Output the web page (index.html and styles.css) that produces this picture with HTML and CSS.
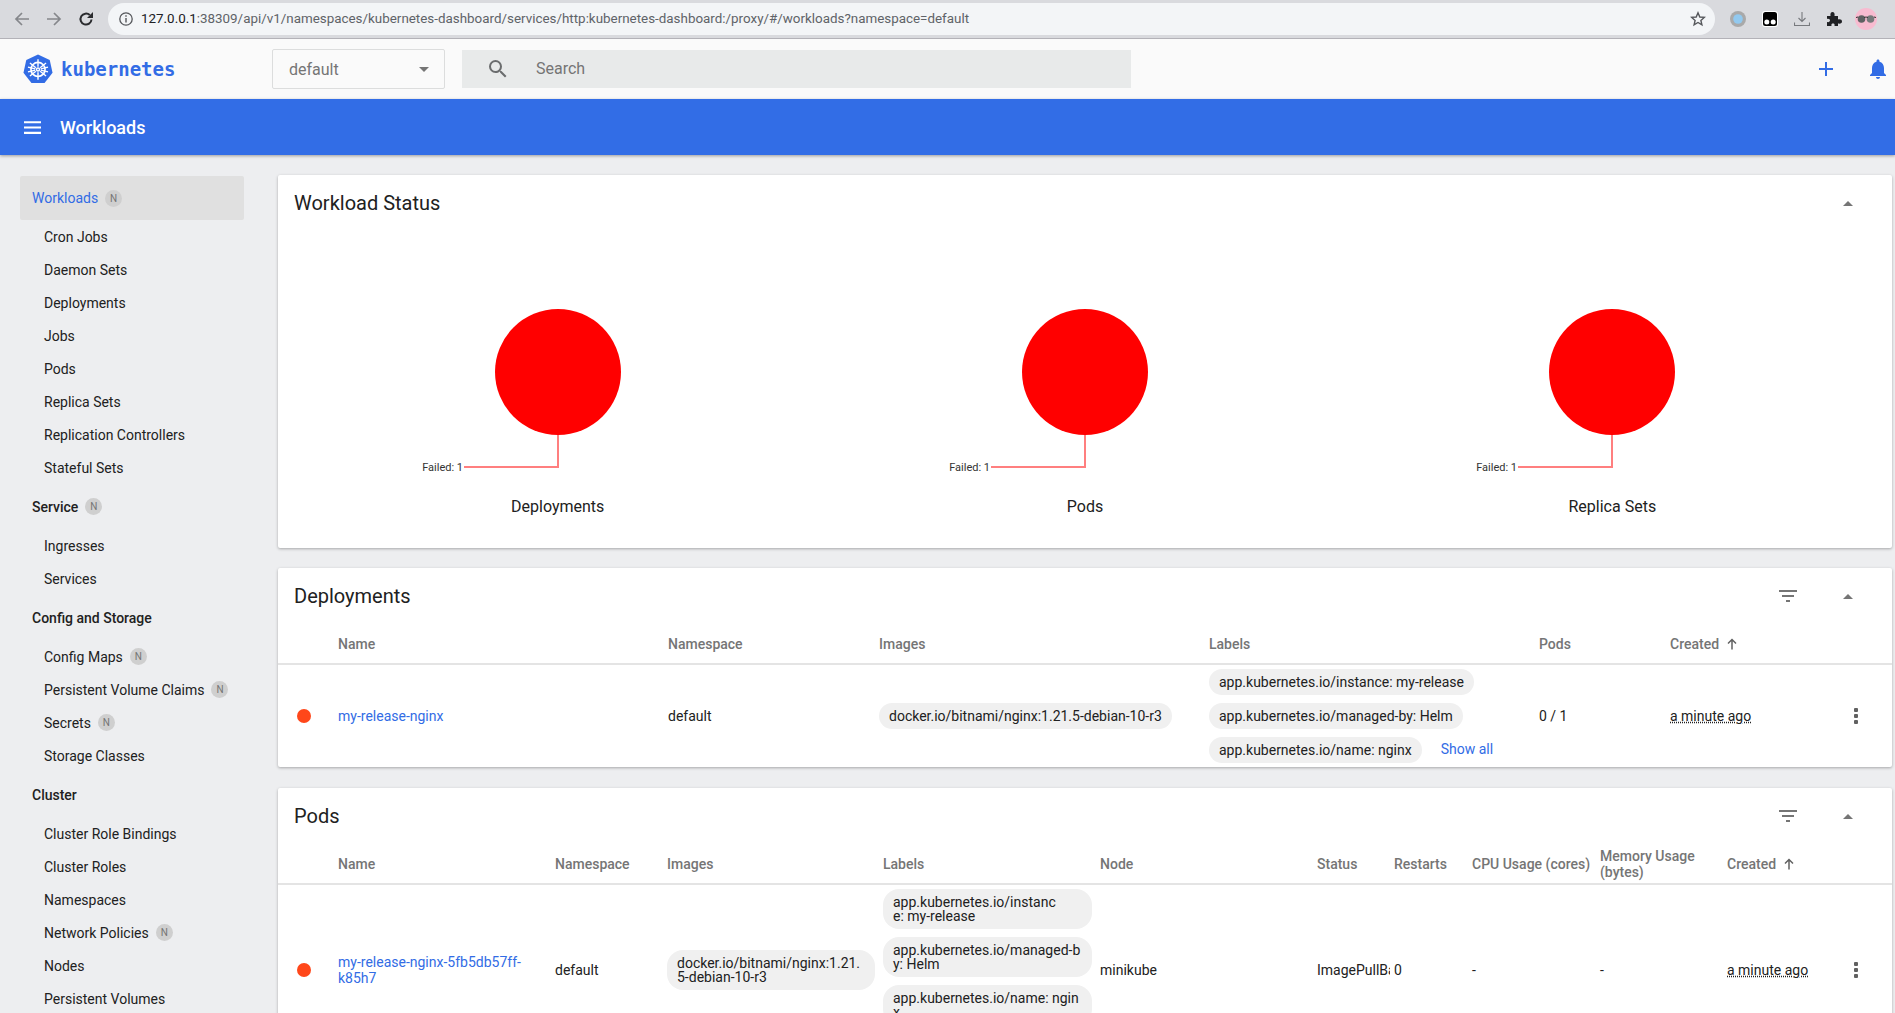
FILE: index.html
```html
<!DOCTYPE html>
<html lang="en">
<head>
    <meta charset="UTF-8">
    <title>Workloads - Kubernetes Dashboard</title>
    <link rel="stylesheet" href="styles.css">
</head>
<body>
    <!-- browser chrome -->
    <div class="browser-bar">
        <svg class="nav-icon" viewBox="0 0 16 16"><path d="M15 8H2M8 2 2 8l6 6" fill="none" stroke="#85878b" stroke-width="1.7"/></svg>
        <svg class="nav-icon" viewBox="0 0 16 16"><path d="M1 8h13M8 2l6 6-6 6" fill="none" stroke="#85878b" stroke-width="1.7"/></svg>
        <svg class="nav-icon" viewBox="0 0 16 16"><path d="M13.500 8.500a5.500 5.500 0 1 1-1.700-4.400" fill="none" stroke="#2a2b2e" stroke-width="2"/><path d="M15 1v6H9z" fill="#2a2b2e"/></svg>
        <div class="address">
            <svg class="info-icon" viewBox="0 0 16 16"><circle cx="8" cy="8" r="6.200" fill="none" stroke="#55575b" stroke-width="1.300"/><path d="M7.300 7h1.400v4.500H7.300zM7.300 4.300h1.400v1.500H7.300z" fill="#55575b"/></svg>
            <span class="url"><b>127.0.0.1</b>:38309/api/v1/namespaces/kubernetes-dashboard/services/http:kubernetes-dashboard:/proxy/#/workloads?namespace=default</span>
            <svg class="star-icon" viewBox="0 0 16 16"><path d="M8 1.800 9.800 6l4.500.4-3.400 3 1 4.400L8 11.500l-3.900 2.300 1-4.400-3.400-3L6.200 6z" fill="none" stroke="#55575b" stroke-width="1.400"/></svg>
        </div>
        <div class="ext-icons">
            <svg viewBox="0 0 16 16"><circle cx="8" cy="8" r="8" fill="#a9a9a9"/><circle cx="8" cy="8" r="4.800" fill="#92c9ef"/></svg>
            <svg viewBox="0 0 16 16"><rect width="16" height="16" rx="3" fill="#fff"/><rect x="1" y="1" width="14" height="14" rx="2.500" fill="#000"/><circle cx="4.800" cy="11" r="2.500" fill="#fff"/><circle cx="11.200" cy="11" r="2.500" fill="#fff"/></svg>
            <svg viewBox="0 0 16 16"><path d="M8 1v9M4.500 7 8 10.500 11.500 7M.5 11.500v3h15v-3" fill="none" stroke="#77797d" stroke-width="1.100"/></svg>
            <svg viewBox="0 0 16 16"><path d="M1 5h3.500C4 2.500 5 1 6.500 1S9 2.500 8.500 5H12v3.500c2.500-.5 4 .3 4 2s-1.500 2.500-4 2V15H8.500c.5-2-.5-2.500-1.500-2.500S5 13 5.500 15H1v-4c2 .5 3-.5 3-1.500S3 7.500 1 8z" fill="#202124"/></svg>
            <svg class="avatar" viewBox="0 0 22 22"><circle cx="11" cy="11" r="11" fill="#f8bbd0"/><circle cx="6.500" cy="11" r="3.800" fill="#5f6062"/><circle cx="15.500" cy="11" r="3.800" fill="#77797b"/><path d="M9 9.500q2-1 4 0M1 9.500l2-.5M21 9.500l-2-.5" fill="none" stroke="#333" stroke-width="1"/></svg>
        </div>
    </div>

    <!-- top toolbar -->
    <header class="app-bar">
        <div class="brand">
            <svg class="logo" viewBox="0 0 32 32">
                <path d="M16 .5 28.500 6.500 31.500 20 23 31H9L.5 20 3.500 6.500z" fill="#326ce5"/>
                <g fill="none" stroke="#fff">
                    <circle cx="16" cy="16.500" r="7.500" stroke-width="1.800"/>
                    <circle cx="16" cy="16.500" r="1.600" stroke-width="1.500"/>
                    <path d="M16 5.500v8M16 19.500v8M7.400 9.600l6.300 5M18.300 18.400l6.300 5M24.600 9.600l-6.300 5M13.700 18.400l-6.300 5M5.300 19l7.800-1.800M18.900 15.800l7.800-1.800M5.300 14l7.800 1.800M18.900 17.200l7.800 1.800" stroke-width="1.500"/>
                </g>
            </svg>
            <span class="brand-name">kubernetes</span>
        </div>
        <div class="ns-select">
            <span>default</span>
            <i class="caret-down"></i>
        </div>
        <div class="search">
            <svg class="search-icon" viewBox="0 0 24 24"><path d="M15.500 14h-.79l-.28-.27A6.470 6.470 0 0 0 16 9.500 6.500 6.500 0 1 0 9.500 16c1.610 0 3.090-.59 4.230-1.570l.27.28v.79l5 4.990L20.490 19l-4.990-5zm-6 0C7.010 14 5 11.990 5 9.500S7.010 5 9.500 5 14 7.010 14 9.500 11.990 14 9.500 14z" fill="#6b6d6e"/></svg>
            <span>Search</span>
        </div>
        <div class="app-actions">
            <svg viewBox="0 0 24 24"><path d="M19 13h-6v6h-2v-6H5v-2h6V5h2v6h6v2z" fill="#326ce5"/></svg>
            <svg viewBox="0 0 24 24"><path d="M12 22c1.100 0 2-.9 2-2h-4c0 1.100.9 2 2 2zm6-6v-5c0-3.070-1.630-5.640-4.500-6.320V4c0-.83-.67-1.500-1.500-1.500s-1.500.67-1.500 1.500v.68C7.640 5.360 6 7.920 6 11v5l-2 2v1h16v-1l-2-2z" fill="#326ce5"/></svg>
        </div>
    </header>

    <div class="title-bar">
        <svg class="menu-icon" viewBox="0 0 16 12"><path d="M0 0h16v2H0zM0 5h16v2H0zM0 10h16v2H0z" fill="#fff"/></svg>
        <span>Workloads</span>
    </div>

    <div class="layout">
        <nav class="sidebar">
            <div class="nav-head active">Workloads <em class="badge">N</em></div>
            <a class="nav-item">Cron Jobs</a>
            <a class="nav-item">Daemon Sets</a>
            <a class="nav-item">Deployments</a>
            <a class="nav-item">Jobs</a>
            <a class="nav-item">Pods</a>
            <a class="nav-item">Replica Sets</a>
            <a class="nav-item">Replication Controllers</a>
            <a class="nav-item">Stateful Sets</a>
            <div class="nav-head">Service <em class="badge">N</em></div>
            <a class="nav-item">Ingresses</a>
            <a class="nav-item">Services</a>
            <div class="nav-head">Config and Storage</div>
            <a class="nav-item">Config Maps <em class="badge">N</em></a>
            <a class="nav-item">Persistent Volume Claims <em class="badge">N</em></a>
            <a class="nav-item">Secrets <em class="badge">N</em></a>
            <a class="nav-item">Storage Classes</a>
            <div class="nav-head">Cluster</div>
            <a class="nav-item">Cluster Role Bindings</a>
            <a class="nav-item">Cluster Roles</a>
            <a class="nav-item">Namespaces</a>
            <a class="nav-item">Network Policies <em class="badge">N</em></a>
            <a class="nav-item">Nodes</a>
            <a class="nav-item">Persistent Volumes</a>
        </nav>

        <main class="content">
            <section class="card status-card">
                <div class="card-head">
                    <h2>Workload Status</h2>
                    <i class="caret-up"></i>
                </div>
                <div class="charts">
                    <div class="chart">
                        <svg viewBox="0 0 300 230"><circle cx="150" cy="118" r="63" fill="#f00"/><path d="M150 181v32H56" fill="none" stroke="#ff7f7f" stroke-width="2"/><text x="55" y="217" text-anchor="end">Failed: 1</text></svg>
                        <p>Deployments</p>
                    </div>
                    <div class="chart">
                        <svg viewBox="0 0 300 230"><circle cx="150" cy="118" r="63" fill="#f00"/><path d="M150 181v32H56" fill="none" stroke="#ff7f7f" stroke-width="2"/><text x="55" y="217" text-anchor="end">Failed: 1</text></svg>
                        <p>Pods</p>
                    </div>
                    <div class="chart">
                        <svg viewBox="0 0 300 230"><circle cx="150" cy="118" r="63" fill="#f00"/><path d="M150 181v32H56" fill="none" stroke="#ff7f7f" stroke-width="2"/><text x="55" y="217" text-anchor="end">Failed: 1</text></svg>
                        <p>Replica Sets</p>
                    </div>
                </div>
            </section>

            <section class="card">
                <div class="card-head">
                    <h2>Deployments</h2>
                    <svg class="filter-icon" viewBox="0 0 18 12"><path d="M0 0h18v2H0zM3 5h12v2H3zM7 10h4v2H7z" fill="#757575"/></svg>
                    <i class="caret-up"></i>
                </div>
                <table class="deployments">
                    <thead>
                        <tr>
                            <th></th><th>Name</th><th>Namespace</th><th>Images</th><th>Labels</th><th>Pods</th>
                            <th>Created <svg class="sort-arrow" viewBox="0 0 12 12"><path d="M6 11.500V1.500M2 5.500l4-4 4 4" fill="none" stroke="#616161" stroke-width="1.500"/></svg></th><th></th>
                        </tr>
                    </thead>
                    <tbody>
                        <tr>
                            <td><i class="dot"></i></td>
                            <td><a class="link">my-release-nginx</a></td>
                            <td>default</td>
                            <td><span class="chip">docker.io/bitnami/nginx:1.21.5-debian-10-r3</span></td>
                            <td>
                                <span class="chip first">app.kubernetes.io/instance: my-release</span>
                                <span class="chip">app.kubernetes.io/managed-by: Helm</span>
                                <span class="chip last">app.kubernetes.io/name: nginx</span><a class="link show-all">Show all</a>
                            </td>
                            <td>0 / 1</td>
                            <td><abbr>a minute ago</abbr></td>
                            <td><i class="more"></i></td>
                        </tr>
                    </tbody>
                </table>
            </section>

            <section class="card">
                <div class="card-head">
                    <h2>Pods</h2>
                    <svg class="filter-icon" viewBox="0 0 18 12"><path d="M0 0h18v2H0zM3 5h12v2H3zM7 10h4v2H7z" fill="#757575"/></svg>
                    <i class="caret-up"></i>
                </div>
                <table class="pods">
                    <thead>
                        <tr>
                            <th></th><th>Name</th><th>Namespace</th><th>Images</th><th>Labels</th><th>Node</th><th>Status</th><th>Restarts</th>
                            <th>CPU Usage (cores)</th><th>Memory Usage (bytes)</th>
                            <th>Created <svg class="sort-arrow" viewBox="0 0 12 12"><path d="M6 11.500V1.500M2 5.500l4-4 4 4" fill="none" stroke="#616161" stroke-width="1.500"/></svg></th><th></th>
                        </tr>
                    </thead>
                    <tbody>
                        <tr>
                            <td><i class="dot"></i></td>
                            <td><a class="link">my-release-nginx-5fb5db57ff-k85h7</a></td>
                            <td>default</td>
                            <td><span class="chip wrap">docker.io/bitnami/nginx:1.21.5-debian-10-r3</span></td>
                            <td class="pod-labels">
                                <span class="chip wrap">app.kubernetes.io/instanc<br>e: my-release</span>
                                <span class="chip wrap">app.kubernetes.io/managed-by: Helm</span>
                                <span class="chip wrap">app.kubernetes.io/name: nginx</span>
                                <a class="link show-all">Show all</a>
                            </td>
                            <td>minikube</td>
                            <td><span class="clip">ImagePullBackOff</span></td>
                            <td>0</td>
                            <td>-</td>
                            <td>-</td>
                            <td><abbr>a minute ago</abbr></td>
                            <td><i class="more"></i></td>
                        </tr>
                    </tbody>
                </table>
            </section>
        </main>
    </div>
</body>
</html>
```

FILE: styles.css
```css
html, body {
    height: 100%;
}
body {
    margin: 0;
    height: 1013px;
    overflow: hidden;
    display: flex;
    flex-direction: column;
    font-family: Roboto, "Liberation Sans", sans-serif;
    font-size: 14px;
    color: #212121;
    background-color: #edeef0;
}

/* browser chrome */
.browser-bar {
    flex: none;
    height: 38px;
    display: flex;
    align-items: center;
    padding-left: 14px;
    background-color: #d9dade;
    border-bottom: 1px solid #b3b2b8;
}
.nav-icon {
    flex: none;
    width: 16px;
    height: 16px;
    margin-right: 16px;
}
.address {
    flex: none;
    width: 1607px;
    height: 32px;
    margin-left: -2px;
    box-sizing: border-box;
    display: flex;
    align-items: center;
    padding: 0 9px 0 10px;
    background-color: #f3f5f7;
    border-radius: 16px;
}
.info-icon {
    flex: none;
    width: 16px;
    height: 16px;
    margin-right: 7px;
}
.url {
    flex: 1;
    padding-bottom: 1px;
    font-size: 13.4px;
    color: #5f6368;
    white-space: nowrap;
}
.url b {
    font-weight: 400;
    color: #202124;
}
.star-icon {
    flex: none;
    width: 16px;
    height: 16px;
}
.ext-icons {
    display: flex;
    align-items: center;
    gap: 16px;
    margin-left: 15px;
}
.ext-icons svg {
    flex: none;
    width: 16px;
    height: 16px;
}
.ext-icons .avatar {
    width: 22px;
    height: 22px;
    margin-left: -3px;
}

/* app toolbar */
.app-bar {
    flex: none;
    height: 60px;
    display: flex;
    align-items: center;
    background-color: #fafafa;
}
.brand {
    width: 272px;
    display: flex;
    align-items: center;
    padding-left: 23px;
    box-sizing: border-box;
}
.logo {
    width: 30px;
    height: 30px;
    margin-right: 8px;
}
.brand-name {
    font-family: "DejaVu Sans Mono", monospace;
    font-size: 19px;
    font-weight: 700;
    color: #326ce5;
}
.ns-select {
    width: 173px;
    height: 40px;
    box-sizing: border-box;
    display: flex;
    align-items: center;
    justify-content: space-between;
    padding: 0 16px;
    border: 1px solid #dcdddd;
    border-radius: 2px;
    font-size: 16px;
    color: #757575;
}
.caret-down {
    width: 0;
    height: 0;
    margin-right: -1px;
    border-left: 5px solid transparent;
    border-right: 5px solid transparent;
    border-top: 5px solid #757575;
}
.search {
    width: 669px;
    height: 38px;
    margin-left: 17px;
    display: flex;
    align-items: center;
    background-color: #e8eaea;
    font-size: 16px;
    color: #757575;
}
.search span {
    padding-bottom: 1px;
}
.search-icon {
    width: 24px;
    height: 24px;
    margin: 0 26px 0 24px;
}
.app-actions {
    margin-left: auto;
    margin-right: 5px;
    display: flex;
    gap: 28px;
}
.app-actions svg {
    width: 24px;
    height: 24px;
}

.title-bar {
    flex: none;
    height: 56px;
    display: flex;
    align-items: center;
    padding-left: 24px;
    background-color: #326de6;
    color: #fff;
    font-size: 18px;
    font-weight: 500;
    box-shadow: 0 1px 3px rgba(0, 0, 0, .35);
    position: relative;
}
.menu-icon {
    width: 17px;
    height: 13px;
    margin-right: 19px;
}

/* sidebar and content */
.layout {
    flex: 1;
    min-height: 0;
    display: flex;
}
.sidebar {
    flex: none;
    width: 224px;
    margin: 21px 34px 0 20px;
}
.nav-head {
    height: 33px;
    margin: 6px 0;
    padding-left: 12px;
    display: flex;
    align-items: center;
    font-weight: 500;
    color: #212121;
}
.nav-head.active {
    height: 44px;
    margin: 0;
    border-radius: 2px;
    background-color: #e0e0e0;
    color: #326ce5;
    font-weight: 400;
}
.nav-item {
    height: 33px;
    padding-left: 24px;
    display: flex;
    align-items: center;
    white-space: nowrap;
}
.badge {
    flex: none;
    width: 17px;
    height: 17px;
    margin-left: 7px;
    border-radius: 50%;
    display: inline-flex;
    align-items: center;
    justify-content: center;
    font-size: 10px;
    font-style: normal;
    font-weight: 400;
    color: #757575;
    background-color: #cfcfcf;
}

.content {
    flex: none;
    width: 1614px;
    padding-top: 20px;
}
.card {
    background-color: #fff;
    border-radius: 2px;
    margin-bottom: 21px;
    box-shadow: 0 1px 3px rgba(0, 0, 0, .3);
}
.card-head {
    height: 56px;
    display: flex;
    align-items: center;
    padding: 0 39px 0 16px;
}
.card-head h2 {
    flex: 1;
    margin: 0;
    font-size: 20px;
    font-weight: 400;
}
.caret-up {
    width: 0;
    height: 0;
    border-left: 5px solid transparent;
    border-right: 5px solid transparent;
    border-bottom: 5px solid #757575;
}
.filter-icon {
    width: 18px;
    height: 12px;
    margin-right: 46px;
}

.status-card {
    height: 373px;
    margin-bottom: 20px;
}
.charts {
    display: grid;
    grid-template-columns: repeat(3, 1fr);
    padding: 0 16px;
}
.chart {
    display: flex;
    flex-direction: column;
    align-items: center;
    margin-top: 23px;
}
.chart svg {
    width: 300px;
    height: 230px;
}
.chart text {
    font-family: Roboto, sans-serif;
    font-size: 11px;
    fill: #333;
}
.chart p {
    margin: 13px 0 0;
    font-size: 16px;
}

/* tables */
table {
    width: 100%;
    border-collapse: collapse;
    table-layout: fixed;
}
th {
    box-sizing: border-box;
    height: 40px;
    padding: 0 8px 0 0;
    text-align: left;
    font-weight: 500;
    color: #757575;
    line-height: 16px;
    border-bottom: 2px solid #e4e4e4;
}
td {
    padding: 0 8px 0 0;
    vertical-align: middle;
}
.deployments th:nth-child(1) { width: 60px; }
.deployments th:nth-child(2) { width: 330px; }
.deployments th:nth-child(3) { width: 211px; }
.deployments th:nth-child(4) { width: 330px; }
.deployments th:nth-child(5) { width: 330px; }
.deployments th:nth-child(6) { width: 131px; }
.deployments th:nth-child(7) { width: 150px; }
.deployments tbody tr {
    height: 103px;
}
.pods th:nth-child(1) { width: 60px; }
.pods th:nth-child(2) { width: 217px; }
.pods th:nth-child(3) { width: 112px; }
.pods th:nth-child(4) { width: 216px; }
.pods th:nth-child(5) { width: 217px; }
.pods th:nth-child(6) { width: 217px; }
.pods th:nth-child(7) { width: 77px; }
.pods th:nth-child(8) { width: 78px; }
.pods th:nth-child(9) { width: 128px; }
.pods th:nth-child(10) { width: 127px; }
.pods th:nth-child(11) { width: 93px; }
.dot {
    display: block;
    width: 14px;
    height: 14px;
    margin-left: 19px;
    border-radius: 50%;
    background-color: #ff471a;
}
.link {
    color: #326ce5;
}
.chip {
    display: block;
    width: fit-content;
    margin: 8px 0;
    padding: 6px 10px;
    line-height: 14px;
    border-radius: 13px;
    background-color: #f0f0f0;
    white-space: nowrap;
}
.chip.first {
    margin-top: 4px;
}
.chip.last {
    display: inline-block;
    vertical-align: middle;
    margin: 0 0 4px;
}
.chip.wrap {
    width: auto;
    white-space: normal;
    word-break: break-all;
    border-radius: 16px;
}
.pod-labels .chip.wrap:first-child {
    margin-top: 4px;
}
.show-all {
    margin-left: 19px;
    vertical-align: 2px;
}
.pods .show-all {
    display: block;
    height: 22px;
    margin-left: 10px;
}
.clip {
    display: block;
    width: 73px;
    white-space: nowrap;
    overflow: hidden;
}
abbr {
    text-decoration: underline dotted;
}
.sort-arrow {
    width: 12px;
    height: 12px;
    margin-left: 3px;
    vertical-align: -1px;
}
.more {
    display: block;
    width: 4px;
    height: 18px;
    margin-left: 34px;
    background: radial-gradient(circle, #616161 2px, transparent 2.5px) 0 0 / 4px 6px repeat-y;
}
```
